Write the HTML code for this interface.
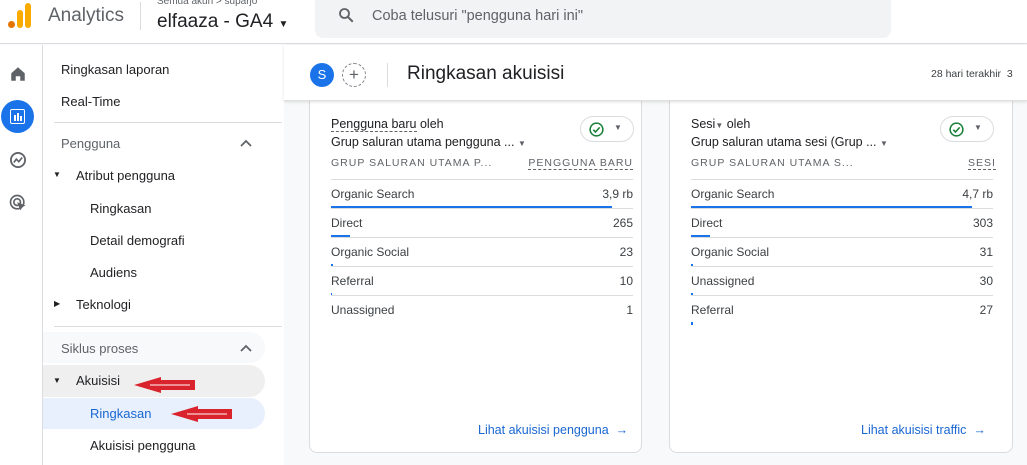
<!DOCTYPE html><html><head><style>
*{margin:0;padding:0;box-sizing:border-box}
body{width:1027px;height:465px;overflow:hidden;font-family:"Liberation Sans",Arial,sans-serif;background:#f8f9fa;position:relative;color:#202124}
.a{position:absolute}
.hdr{left:0;top:0;width:1027px;height:44px;background:#fff;border-bottom:1px solid #dadce0}
.rail{left:0;top:45px;width:43px;height:420px;background:#fff;border-right:1px solid #dadce0}
.side{left:43px;top:45px;width:241px;height:420px;background:#fff}
.si{position:absolute;font-size:13px;color:#202124}
.card{background:#fff;border:1px solid #dadce0;border-radius:8px}
.row{position:absolute;left:21px;width:302px;height:29px;border-top:1px solid #dadce0;font-size:12px;color:#3c4043}
.row span{position:absolute;top:7px}
.row .v{right:0}
.row .b{position:absolute;left:0;top:26px;height:3px;background:#1a73e8}
.th{font-size:10.5px;letter-spacing:1px;color:#5f6368}
.chk{width:54px;height:26px;border:1px solid #dadce0;border-radius:13px}
</style></head><body>
<div class="a hdr">
 <div class="a" style="left:8px;top:21px;width:7px;height:7px;border-radius:50%;background:#e37400"></div>
 <div class="a" style="left:17px;top:10px;width:6px;height:18px;border-radius:3px;background:#f9ab00"></div>
 <div class="a" style="left:25px;top:3px;width:6px;height:25px;border-radius:3px;background:#f9ab00"></div>
 <div class="a" style="left:48px;top:5px;font-size:19px;color:#5f6368">Analytics</div>
 <div class="a" style="left:140px;top:2px;width:1px;height:28px;background:#dadce0"></div>
 <div class="a" style="left:157px;top:-4px;font-size:10px;color:#5f6368">Semua akun &gt; suparjo</div>
 <div class="a" style="left:157px;top:11px;font-size:19px;color:#202124">elfaaza - GA4 <span style="font-size:10px">▼</span></div>
 <div class="a" style="left:315px;top:0;width:576px;height:38px;background:#f1f3f4;border-radius:0 0 8px 8px"></div>
 <svg class="a" style="left:337px;top:6px" width="18" height="18" viewBox="0 0 24 24"><circle cx="10" cy="10" r="6" fill="none" stroke="#5f6368" stroke-width="2.4"/><path d="M14.5 14.5L21 21" stroke="#5f6368" stroke-width="2.6"/></svg>
 <div class="a" style="left:372px;top:8px;font-size:14.5px;color:#5f6368">Coba telusuri "pengguna hari ini"</div>
</div>
<div class="a rail">
 <svg class="a" style="left:9px;top:20px" width="18" height="18" viewBox="0 0 24 24"><path d="M3 11L12 3l9 8v10h-6v-6h-6v6H3z" fill="#5f6368"/></svg>
 <div class="a" style="left:1px;top:55px;width:33px;height:33px;border-radius:50%;background:#1a73e8"></div>
 <div class="a" style="left:10px;top:64px;width:15px;height:15px;border:1.5px solid #fff;border-radius:2px"><div class="a" style="left:3px;top:5px;width:1.5px;height:6px;background:#fff"></div><div class="a" style="left:6px;top:3px;width:1.5px;height:8px;background:#fff"></div><div class="a" style="left:9px;top:6px;width:1.5px;height:5px;background:#fff"></div></div>
 <svg class="a" style="left:8px;top:105px" width="20" height="20" viewBox="0 0 24 24"><circle cx="12" cy="12" r="8.5" fill="none" stroke="#5f6368" stroke-width="2.2"/><path d="M7 15l3-4 3 3 4-5" fill="none" stroke="#5f6368" stroke-width="2"/></svg>
 <svg class="a" style="left:8px;top:148px" width="20" height="20" viewBox="0 0 24 24"><circle cx="11" cy="11" r="8" fill="none" stroke="#5f6368" stroke-width="2"/><circle cx="11" cy="11" r="4" fill="none" stroke="#5f6368" stroke-width="2"/><path d="M11 11l10 4-4 2-2 4z" fill="#5f6368"/></svg>
</div>
<div class="a side">
 <div class="si" style="left:18px;top:17px">Ringkasan laporan</div>
 <div class="si" style="left:18px;top:49px">Real-Time</div>
 <div class="a" style="left:11px;top:77px;width:228px;height:1px;background:#dadce0"></div>
 <div class="si" style="left:18px;top:91px;color:#5f6368">Pengguna</div>
 <svg class="a" style="left:197px;top:94px" width="12" height="8" viewBox="0 0 12 8"><path d="M1 7L6 2l5 5" fill="none" stroke="#5f6368" stroke-width="1.8"/></svg>
 <div class="si" style="left:10px;top:125px;font-size:8px">▼</div>
 <div class="si" style="left:33px;top:123px">Atribut pengguna</div>
 <div class="si" style="left:47px;top:156px">Ringkasan</div>
 <div class="si" style="left:47px;top:188px">Detail demografi</div>
 <div class="si" style="left:47px;top:220px">Audiens</div>
 <div class="si" style="left:11px;top:254px;font-size:8px">▶</div>
 <div class="si" style="left:33px;top:252px">Teknologi</div>
 <div class="a" style="left:11px;top:281px;width:228px;height:1px;background:#dadce0"></div>
 <div class="a" style="left:0;top:287px;width:222px;height:31px;background:#f8f9fa;border-radius:0 16px 16px 0"></div>
 <div class="si" style="left:18px;top:296px;color:#5f6368">Siklus proses</div>
 <svg class="a" style="left:197px;top:299px" width="12" height="8" viewBox="0 0 12 8"><path d="M1 7L6 2l5 5" fill="none" stroke="#5f6368" stroke-width="1.8"/></svg>
 <div class="a" style="left:0;top:320px;width:222px;height:32px;background:#efefef;border-radius:0 16px 16px 0"></div>
 <div class="si" style="left:10px;top:331px;font-size:8px">▼</div>
 <div class="si" style="left:33px;top:328px">Akuisisi</div>
 <div class="a" style="left:0;top:353px;width:222px;height:31px;background:#e8f0fe;border-radius:0 16px 16px 0"></div>
 <div class="si" style="left:47px;top:361px;color:#1967d2">Ringkasan</div>
 <div class="si" style="left:47px;top:393px">Akuisisi pengguna</div>
</div>
<svg class="a" style="left:0;top:0;z-index:5" width="300" height="465" viewBox="0 0 300 465">
 <polygon points="134,385 161,377 161,380 195,380 195,390 161,390 161,393" fill="#d9232d"/>
 <line x1="150" y1="385" x2="190" y2="385" stroke="#f5b5b5" stroke-width="1.5"/>
 <polygon points="171,414 198,406 198,409 232,409 232,419 198,419 198,422" fill="#d9232d"/>
 <line x1="187" y1="414" x2="227" y2="414" stroke="#f5b5b5" stroke-width="1.5"/>
</svg>

<div class="a card" style="left:309px;top:92px;width:333px;height:361px">
 <div class="a" style="left:21px;top:24px;font-size:12.5px;color:#202124"><span style="border-bottom:1px dashed #5f6368">Pengguna baru</span> oleh</div>
 <div class="a" style="left:21px;top:42px;font-size:12.5px;color:#202124">Grup saluran utama pengguna ... <span style="font-size:8px;color:#5f6368">▼</span></div>
 <div class="a chk" style="left:270px;top:23px"><svg class="a" style="left:7px;top:4px" width="17" height="17" viewBox="0 0 24 24"><circle cx="12" cy="12" r="9" fill="none" stroke="#188038" stroke-width="2.2"/><path d="M7.5 12.5l3 3 6-6.5" fill="none" stroke="#188038" stroke-width="2.2"/></svg><span class="a" style="left:33px;top:6px;font-size:8px;color:#5f6368">▼</span></div>
 <div class="a th" style="left:21px;top:64px">GRUP SALURAN UTAMA P...</div>
 <div class="a th" style="right:8px;top:64px;border-bottom:1px dashed #5f6368">PENGGUNA BARU</div>
 <div class="row" style="top:86px"><span>Organic Search</span><span class="v">3,9 rb</span><div class="b" style="width:281px"></div></div>
 <div class="row" style="top:115px"><span>Direct</span><span class="v">265</span><div class="b" style="width:19px"></div></div>
 <div class="row" style="top:144px"><span>Organic Social</span><span class="v">23</span><div class="b" style="width:2px"></div></div>
 <div class="row" style="top:173px"><span>Referral</span><span class="v">10</span><div class="b" style="width:1px"></div></div>
 <div class="row" style="top:202px"><span>Unassigned</span><span class="v">1</span></div>
 <div class="a" style="left:168px;top:330px;font-size:12.5px;color:#1967d2">Lihat akuisisi pengguna &nbsp;→</div>
</div>
<div class="a card" style="left:669px;top:92px;width:344px;height:361px">
 <div class="a" style="left:21px;top:24px;font-size:12.5px;color:#202124">Sesi<span style="font-size:8px;color:#5f6368">▼</span> oleh</div>
 <div class="a" style="left:21px;top:42px;font-size:12.5px;color:#202124">Grup saluran utama sesi (Grup ... <span style="font-size:8px;color:#5f6368">▼</span></div>
 <div class="a chk" style="left:270px;top:23px"><svg class="a" style="left:7px;top:4px" width="17" height="17" viewBox="0 0 24 24"><circle cx="12" cy="12" r="9" fill="none" stroke="#188038" stroke-width="2.2"/><path d="M7.5 12.5l3 3 6-6.5" fill="none" stroke="#188038" stroke-width="2.2"/></svg><span class="a" style="left:33px;top:6px;font-size:8px;color:#5f6368">▼</span></div>
 <div class="a th" style="left:21px;top:64px">GRUP SALURAN UTAMA S...</div>
 <div class="a th" style="left:298px;top:64px;border-bottom:1px dashed #5f6368">SESI</div>
 <div class="row" style="top:86px"><span>Organic Search</span><span class="v">4,7 rb</span><div class="b" style="width:281px"></div></div>
 <div class="row" style="top:115px"><span>Direct</span><span class="v">303</span><div class="b" style="width:19px"></div></div>
 <div class="row" style="top:144px"><span>Organic Social</span><span class="v">31</span><div class="b" style="width:2px"></div></div>
 <div class="row" style="top:173px"><span>Unassigned</span><span class="v">30</span><div class="b" style="width:2px"></div></div>
 <div class="row" style="top:202px"><span>Referral</span><span class="v">27</span><div class="b" style="width:2px"></div></div>
 <div class="a" style="left:191px;top:330px;font-size:12.5px;color:#1967d2">Lihat akuisisi traffic &nbsp;→</div>
</div>
<div class="a" style="left:284px;top:45px;width:743px;height:56px;background:#fff;border-bottom:1px solid #e0e0e0;box-shadow:0 1px 3px rgba(0,0,0,.12);z-index:3">
 <div class="a" style="left:26px;top:18px;width:24px;height:24px;border-radius:50%;background:#1a73e8;color:#fff;font-size:13px;text-align:center;line-height:24px">S</div>
 <div class="a" style="left:58px;top:18px;width:24px;height:24px;border-radius:50%;border:1px dashed #80868b;color:#5f6368;font-size:17px;text-align:center;line-height:21px">+</div>
 <div class="a" style="left:103px;top:18px;width:1px;height:24px;background:#dadce0"></div>
 <div class="a" style="left:123px;top:18px;font-size:19px;color:#202124">Ringkasan akuisisi</div>
 <div class="a" style="left:647px;top:23px;font-size:10.5px;color:#3c4043">28 hari terakhir &nbsp;3</div>
</div>
</body></html>
